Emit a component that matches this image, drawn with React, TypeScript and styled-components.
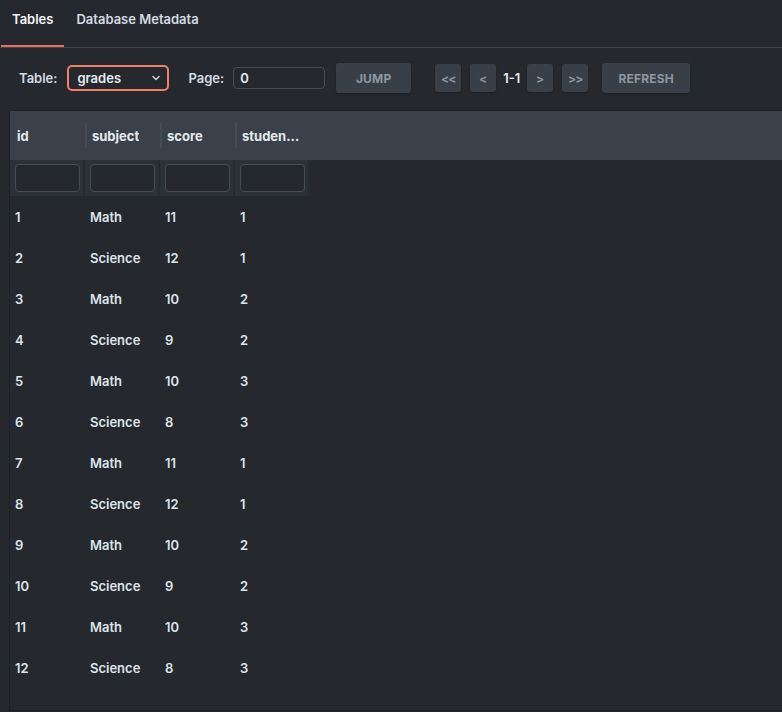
import React, { useState } from 'react';
import styled, { createGlobalStyle } from 'styled-components';

const GlobalStyle = createGlobalStyle`
    html, body {
        margin: 0;
        padding: 0;
        background: #25292e;
        font-family: Inter, "Noto Sans", "Liberation Sans", sans-serif;
    }
    * {
        box-sizing: border-box;
    }
`;

const Page = styled.div`
    width: 782px;
    height: 712px;
    background: #25292e;
    color: #dde3ea;
    overflow: hidden;
    display: flex;
    flex-direction: column;
`;

const TabBar = styled.div`
    display: flex;
    height: 48px;
    border-bottom: 1px solid #41464d;
    padding-left: 1px;
`;

const Tab = styled.div<{ $active?: boolean }>`
    display: flex;
    align-items: center;
    height: 47px;
    padding: 0 11px 8px;
    margin-right: 1px;
    font-size: 13px;
    font-weight: 600;
    color: ${(p) => (p.$active ? '#f3f5f7' : '#d3dae3')};
    border-bottom: 2px solid ${(p) => (p.$active ? '#e9705e' : 'transparent')};
`;

const Toolbar = styled.div`
    display: flex;
    align-items: center;
    height: 62px;
    padding-left: 19px;
    padding-bottom: 2px;
`;

const Label = styled.span<{ $ml?: number }>`
    font-size: 13px;
    font-weight: 600;
    color: #d3dae3;
    margin-left: ${(p) => p.$ml ?? 0}px;
    margin-right: 9px;
`;

const SelectBox = styled.div`
    width: 102px;
    height: 26px;
    margin-left: 1px;
    border: 2px solid #f0806c;
    border-radius: 5px;
    display: flex;
    align-items: center;
    justify-content: space-between;
    padding: 0 6px 0 8px;
    font-size: 13px;
    font-weight: 600;
    color: #e6ebf0;
`;

const PageInput = styled.input`
    width: 92px;
    height: 22px;
    border: 1px solid #464c54;
    border-radius: 4px;
    background: #25292e;
    color: #e6ebf0;
    font-family: inherit;
    font-size: 13px;
    font-weight: 600;
    padding: 0 6px;
    outline: none;
`;

const Button = styled.button<{ $w: number; $h?: number; $ml?: number; $tight?: boolean }>`
    width: ${(p) => p.$w}px;
    height: ${(p) => p.$h ?? 30}px;
    margin-left: ${(p) => p.$ml ?? 0}px;
    border: none;
    border-radius: 3px;
    background: #383f47;
    color: #8e97a1;
    font-family: inherit;
    font-size: 12px;
    font-weight: 700;
    letter-spacing: ${(p) => (p.$tight ? '-1px' : '0.2px')};
    padding: 0;
    display: flex;
    align-items: center;
    justify-content: center;
    box-shadow: 0 1px 2px rgba(0, 0, 0, 0.25);
`;

const PageCount = styled.span`
    margin-left: 7px;
    margin-right: 7px;
    font-size: 13px;
    font-weight: 600;
    color: #e6ebf0;
`;

const TableFrame = styled.div`
    margin-left: 9px;
    flex: 1;
    border-top: 1px solid #1d2024;
    border-left: 1px solid #1d2024;
    border-bottom: 1px solid #1d2024;
    margin-bottom: 1px;
    overflow: hidden;
`;

const HeaderRow = styled.div`
    display: flex;
    height: 49px;
    background: #3a414a;
`;

const HeaderCell = styled.div`
    position: relative;
    width: 75px;
    display: flex;
    align-items: center;
    padding: 0 8px 0 7px;
    font-size: 13px;
    font-weight: 700;
    color: #e4e9ee;
    white-space: nowrap;
    &:not(:last-child)::after {
        content: '';
        position: absolute;
        right: -2px;
        top: 12px;
        bottom: 12px;
        width: 2px;
        background: #454c56;
    }
`;

const HeaderText = styled.span`
    overflow: hidden;
    text-overflow: ellipsis;
`;

const FilterRow = styled.div`
    display: flex;
    height: 36px;
`;

const FilterCell = styled.div`
    width: 75px;
    height: 36px;
    padding: 4px 5px;
    background: #2c3137;
    border-right: 2px solid #272b30;
`;

const FilterInput = styled.input`
    width: 65px;
    height: 28px;
    border: 1px solid #464c54;
    border-radius: 4px;
    background: #25292e;
    outline: none;
`;

const Row = styled.div`
    display: flex;
    height: 41px;
    align-items: center;
`;

const Cell = styled.div`
    width: 75px;
    padding-left: 5px;
    font-size: 13px;
    font-weight: 600;
    color: #dde3ea;
`;

const Chevron = () => (
    <svg width="10" height="10" viewBox="0 0 10 10">
        <path d="M2 3.5 L5 6.5 L8 3.5" fill="none" stroke="#cfd6de" strokeWidth="1.4" strokeLinecap="round" strokeLinejoin="round" />
    </svg>
);

const rows = [
    [1, 'Math', 11, 1],
    [2, 'Science', 12, 1],
    [3, 'Math', 10, 2],
    [4, 'Science', 9, 2],
    [5, 'Math', 10, 3],
    [6, 'Science', 8, 3],
    [7, 'Math', 11, 1],
    [8, 'Science', 12, 1],
    [9, 'Math', 10, 2],
    [10, 'Science', 9, 2],
    [11, 'Math', 10, 3],
    [12, 'Science', 8, 3],
];

const columns = ['id', 'subject', 'score', 'student_id'];

const App = () => {
    const [page, setPage] = useState('0');

    return (
        <Page>
            <GlobalStyle />
            <TabBar>
                <Tab $active>Tables</Tab>
                <Tab>Database Metadata</Tab>
            </TabBar>
            <Toolbar>
                <Label>Table:</Label>
                <SelectBox>
                    grades
                    <Chevron />
                </SelectBox>
                <Label $ml={19}>Page:</Label>
                <PageInput value={page} onChange={(e) => setPage(e.target.value)} />
                <Button $w={75} $ml={11}>JUMP</Button>
                <Button $w={26} $h={28} $ml={24} $tight>&lt;&lt;</Button>
                <Button $w={26} $h={28} $ml={9}>&lt;</Button>
                <PageCount>1-1</PageCount>
                <Button $w={26} $h={28}>&gt;</Button>
                <Button $w={26} $h={28} $ml={9} $tight>&gt;&gt;</Button>
                <Button $w={88} $ml={14}>REFRESH</Button>
            </Toolbar>
            <TableFrame>
                <HeaderRow>
                    {columns.map((c) => (
                        <HeaderCell key={c}>
                            <HeaderText>{c}</HeaderText>
                        </HeaderCell>
                    ))}
                </HeaderRow>
                <FilterRow>
                    {columns.map((c) => (
                        <FilterCell key={c}>
                            <FilterInput />
                        </FilterCell>
                    ))}
                </FilterRow>
                {rows.map((r) => (
                    <Row key={r[0]}>
                        {r.map((v, i) => (
                            <Cell key={i}>{v}</Cell>
                        ))}
                    </Row>
                ))}
            </TableFrame>
        </Page>
    );
};

export default App;
